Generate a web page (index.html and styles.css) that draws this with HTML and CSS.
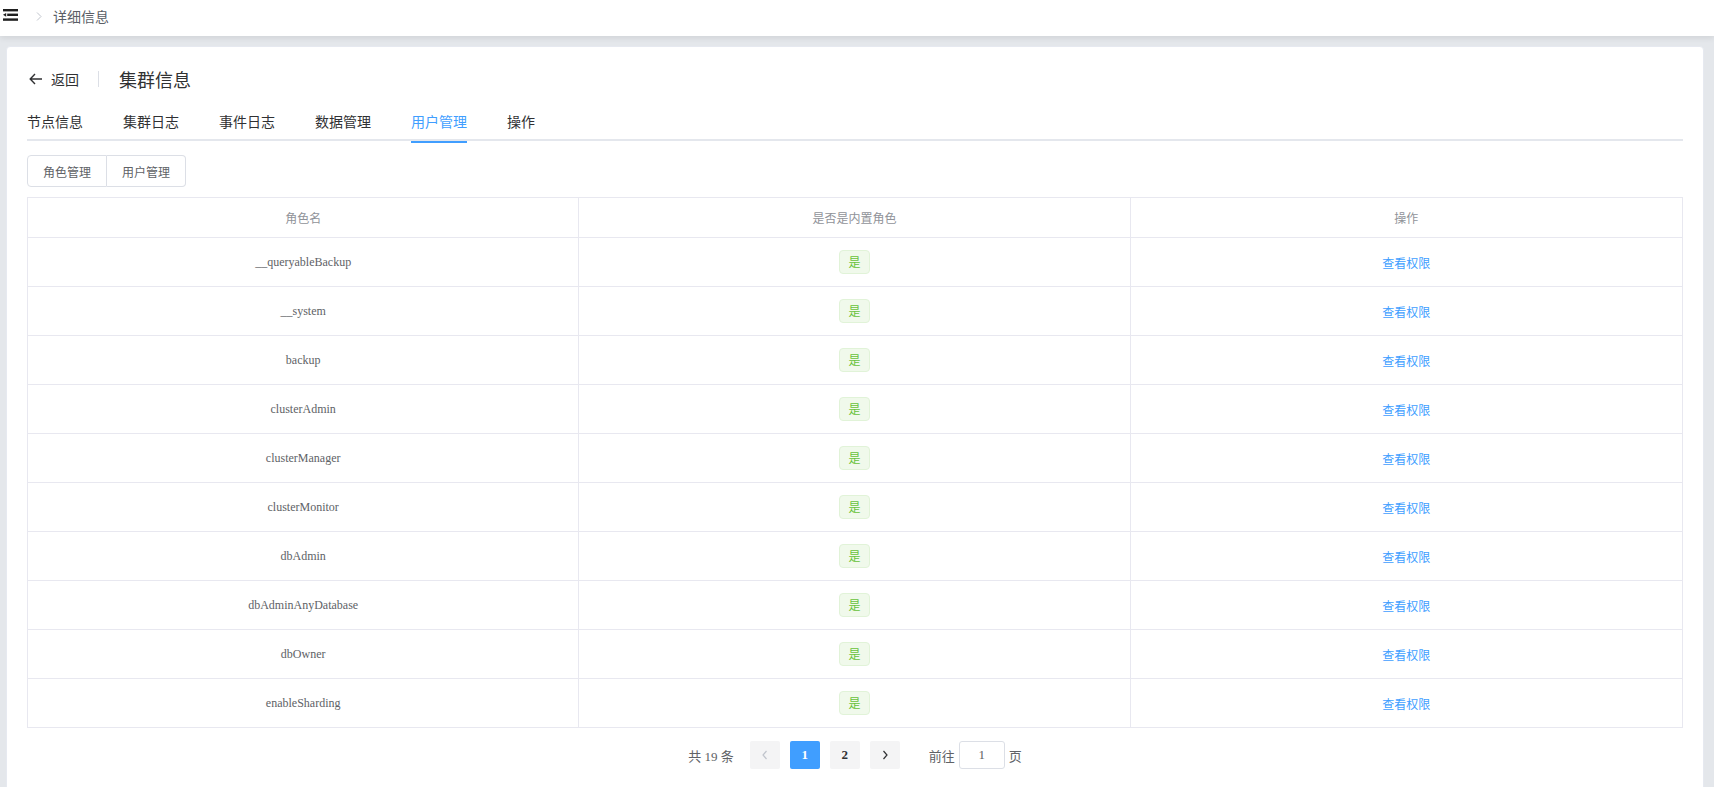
FILE: index.html
```html
<!DOCTYPE html>
<html lang="zh-CN">
<head>
<meta charset="utf-8">
<title>详细信息</title>
<link rel="stylesheet" href="styles.css">
</head>
<body>
<header class="topbar">
  <svg class="fold-icon" width="16" height="13" viewBox="0 0 16 13">
    <rect x="0" y="0" width="15" height="2.4" fill="#1f1f1f"/>
    <polygon points="0,5.8 3.2,3.9 3.2,7.7" fill="#1f1f1f"/>
    <rect x="4.2" y="4.6" width="10.8" height="2.4" fill="#1f1f1f"/>
    <rect x="0" y="9.4" width="15" height="2.4" fill="#1f1f1f"/>
  </svg>
  <svg class="crumb-sep" width="6" height="9" viewBox="0 0 6 9">
    <polyline points="1,0.5 5,4.5 1,8.5" fill="none" stroke="#c0c4cc" stroke-width="1"/>
  </svg>
  <span class="crumb">详细信息</span>
</header>
<main class="main">
  <section class="card">
    <div class="page-header">
      <div class="ph-left">
        <svg class="back-icon" width="18" height="18" viewBox="0 0 18 18">
          <path d="M3.5 9 H15 M8 4 L3.2 9 L8 14" fill="none" stroke="#303133" stroke-width="1.4" stroke-linejoin="miter"/>
        </svg>
        <span class="ph-title">返回</span>
      </div>
      <div class="ph-content">集群信息</div>
    </div>
    <nav class="tabs">
      <span class="tab">节点信息</span>
      <span class="tab">集群日志</span>
      <span class="tab">事件日志</span>
      <span class="tab">数据管理</span>
      <span class="tab active">用户管理</span>
      <span class="tab">操作</span>
    </nav>
    <div class="btn-group">
      <button class="btn">角色管理</button>
      <button class="btn">用户管理</button>
    </div>
    <div class="table">
      <div class="row head">
        <div class="cell">角色名</div>
        <div class="cell">是否是内置角色</div>
        <div class="cell">操作</div>
      </div>
      <div class="row"><div class="cell">__queryableBackup</div><div class="cell"><span class="tag">是</span></div><div class="cell"><a class="link">查看权限</a></div></div>
      <div class="row"><div class="cell">__system</div><div class="cell"><span class="tag">是</span></div><div class="cell"><a class="link">查看权限</a></div></div>
      <div class="row"><div class="cell">backup</div><div class="cell"><span class="tag">是</span></div><div class="cell"><a class="link">查看权限</a></div></div>
      <div class="row"><div class="cell">clusterAdmin</div><div class="cell"><span class="tag">是</span></div><div class="cell"><a class="link">查看权限</a></div></div>
      <div class="row"><div class="cell">clusterManager</div><div class="cell"><span class="tag">是</span></div><div class="cell"><a class="link">查看权限</a></div></div>
      <div class="row"><div class="cell">clusterMonitor</div><div class="cell"><span class="tag">是</span></div><div class="cell"><a class="link">查看权限</a></div></div>
      <div class="row"><div class="cell">dbAdmin</div><div class="cell"><span class="tag">是</span></div><div class="cell"><a class="link">查看权限</a></div></div>
      <div class="row"><div class="cell">dbAdminAnyDatabase</div><div class="cell"><span class="tag">是</span></div><div class="cell"><a class="link">查看权限</a></div></div>
      <div class="row"><div class="cell">dbOwner</div><div class="cell"><span class="tag">是</span></div><div class="cell"><a class="link">查看权限</a></div></div>
      <div class="row"><div class="cell">enableSharding</div><div class="cell"><span class="tag">是</span></div><div class="cell"><a class="link">查看权限</a></div></div>
    </div>
    <div class="pagination">
      <span class="total">共 19 条</span>
      <button class="pg-btn disabled">
        <svg width="8" height="10" viewBox="0 0 8 10"><polyline points="5.5,1 2,5 5.5,9" fill="none" stroke="#c0c4cc" stroke-width="1.2"/></svg>
      </button>
      <button class="pg-btn num active">1</button>
      <button class="pg-btn num">2</button>
      <button class="pg-btn">
        <svg width="8" height="10" viewBox="0 0 8 10"><polyline points="2.5,1 6,5 2.5,9" fill="none" stroke="#303133" stroke-width="1.2"/></svg>
      </button>
      <span class="jump">前往<span class="jump-input">1</span>页</span>
    </div>
  </section>
</main>
</body>
</html>
```

FILE: styles.css
```css
html, body {
  margin: 0;
  padding: 0;
  height: 787px;
  overflow: hidden;
}
body {
  font-family: "Liberation Serif", "Noto Sans CJK SC", serif;
  background: #e4e7eb;
  color: #303133;
}
.topbar {
  height: 36px;
  background: #ffffff;
  display: flex;
  align-items: center;
  box-shadow: 0 2px 6px rgba(0, 0, 0, 0.09);
  position: relative;
  z-index: 2;
}
.fold-icon {
  margin-left: 3px;
  margin-top: -5px;
}
.crumb-sep {
  margin-left: 17px;
  margin-top: -3px;
}
.crumb {
  margin-left: 11px;
  margin-top: -4px;
  font-family: "Noto Sans CJK SC", sans-serif;
  font-size: 14px;
  color: #5a5e66;
}
.main {
  padding: 10px 10px 0 6px;
}
.card {
  background: #ffffff;
  border: 1px solid #e6e9f0;
  border-radius: 4px;
  padding: 20px 20px 20px 20px;
  height: 760px;
  box-sizing: border-box;
}
.page-header {
  display: flex;
  align-items: center;
  height: 24px;
  line-height: 24px;
  margin-bottom: 10px;
}
.ph-left {
  display: flex;
  align-items: center;
  margin-right: 40px;
  position: relative;
}
.ph-left::after {
  content: "";
  position: absolute;
  right: -20px;
  top: 4px;
  width: 1px;
  height: 16px;
  background: #dcdfe6;
}
.back-icon {
  margin-right: 6px;
}
.ph-title {
  font-family: "Noto Sans CJK SC", sans-serif;
  font-size: 14px;
  color: #303133;
}
.ph-content {
  font-family: "Noto Sans CJK SC", sans-serif;
  font-size: 18px;
  color: #303133;
}
.tabs {
  display: flex;
  height: 40px;
  border-bottom: 2px solid #e4e7ed;
  box-sizing: border-box;
  margin-bottom: 14px;
}
.tab {
  height: 40px;
  line-height: 40px;
  padding: 0 20px;
  font-family: "Noto Sans CJK SC", sans-serif;
  font-size: 14px;
  color: #303133;
  position: relative;
}
.tab:first-child {
  padding-left: 0;
}
.tab.active {
  color: #409eff;
}
.tab.active::after {
  content: "";
  position: absolute;
  left: 20px;
  right: 20px;
  bottom: -2px;
  height: 2px;
  background: #409eff;
}
.btn-group {
  display: flex;
  margin-bottom: 10px;
}
.btn {
  height: 32px;
  padding: 0 15px;
  font-family: "Noto Sans CJK SC", sans-serif;
  font-size: 12px;
  color: #606266;
  background: #ffffff;
  border: 1px solid #dcdfe6;
  margin: 0;
}
.btn:first-child {
  border-radius: 4px 0 0 4px;
}
.btn + .btn {
  border-left: none;
  border-radius: 0 4px 4px 0;
}
.table {
  border: 1px solid #e8e8f0;
  border-bottom: none;
}
.row {
  display: grid;
  grid-template-columns: 1fr 1fr 1fr;
  height: 49px;
  border-bottom: 1px solid #e8e8f0;
  box-sizing: border-box;
}
.row.head {
  height: 40px;
}
.cell {
  display: flex;
  align-items: center;
  justify-content: center;
  border-right: 1px solid #e8e8f0;
  font-size: 12px;
  color: #606266;
}
.cell:last-child {
  border-right: none;
}
.row.head .cell {
  color: #909399;
  font-family: "Noto Sans CJK SC", sans-serif;
}
.tag {
  display: inline-block;
  height: 24px;
  line-height: 22px;
  padding: 0 8px;
  box-sizing: border-box;
  border: 1px solid #e1f3d8;
  background: #f0f9eb;
  color: #67c23a;
  border-radius: 4px;
  font-family: "Noto Sans CJK SC", sans-serif;
  font-size: 12px;
}
.link {
  color: #409eff;
  font-family: "Noto Sans CJK SC", sans-serif;
  font-size: 12px;
  cursor: pointer;
}
.pagination {
  display: flex;
  justify-content: center;
  align-items: center;
  margin-top: 13px;
  font-size: 13px;
  color: #606266;
}
.total {
  margin-right: 11px;
}
.pg-btn {
  width: 30px;
  height: 28px;
  margin: 0 5px;
  padding: 0;
  border: none;
  border-radius: 2px;
  background: #f4f4f5;
  display: flex;
  align-items: center;
  justify-content: center;
  font-family: "Liberation Serif", serif;
  font-size: 13px;
  font-weight: bold;
  color: #303133;
}
.pg-btn.active {
  background: #409eff;
  color: #ffffff;
}
.jump {
  margin-left: 24px;
  display: flex;
  align-items: center;
}
.jump-input {
  display: inline-block;
  width: 46px;
  height: 28px;
  line-height: 26px;
  box-sizing: border-box;
  border: 1px solid #dcdfe6;
  border-radius: 3px;
  text-align: center;
  margin: 0 4px;
  color: #606266;
}
```
